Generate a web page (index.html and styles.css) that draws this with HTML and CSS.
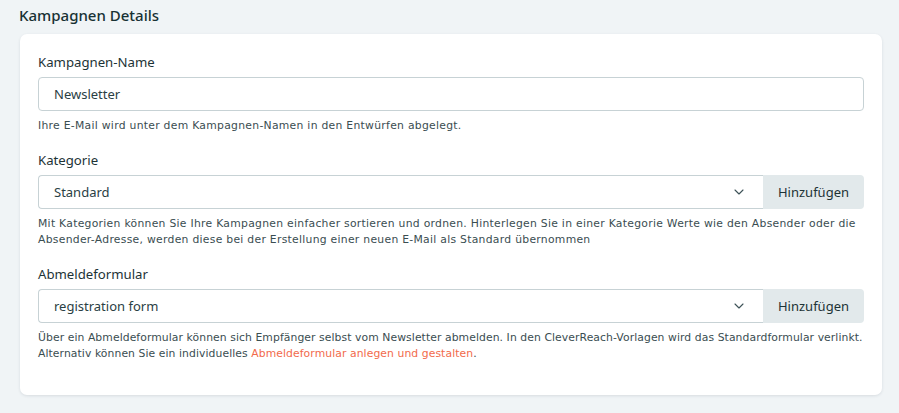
FILE: index.html
```html
<!DOCTYPE html>
<html lang="de">
<head>
<meta charset="utf-8">
<link rel="stylesheet" href="styles.css">
</head>
<body>
<div class="page">
  <h2 class="section-title">Kampagnen Details</h2>
  <div class="card">
    <div class="field">
      <label class="label">Kampagnen-Name</label>
      <div class="input">Newsletter</div>
      <p class="help">Ihre E-Mail wird unter dem Kampagnen-Namen in den Entwürfen abgelegt.</p>
    </div>
    <div class="field">
      <label class="label">Kategorie</label>
      <div class="group">
        <div class="select"><span>Standard</span>
          <svg class="chev" width="10" height="6" viewBox="0 0 10 6"><path d="M1 1 L5 5 L9 1" fill="none" stroke="#3d5257" stroke-width="1.1" stroke-linecap="round" stroke-linejoin="round"/></svg>
        </div>
        <div class="btn">Hinzufügen</div>
      </div>
      <p class="help">Mit Kategorien können Sie Ihre Kampagnen einfacher sortieren und ordnen. Hinterlegen Sie in einer Kategorie Werte wie den Absender oder die Absender-Adresse, werden diese bei der Erstellung einer neuen E-Mail als Standard übernommen</p>
    </div>
    <div class="field">
      <label class="label">Abmeldeformular</label>
      <div class="group">
        <div class="select"><span>registration form</span>
          <svg class="chev" width="10" height="6" viewBox="0 0 10 6"><path d="M1 1 L5 5 L9 1" fill="none" stroke="#3d5257" stroke-width="1.1" stroke-linecap="round" stroke-linejoin="round"/></svg>
        </div>
        <div class="btn">Hinzufügen</div>
      </div>
      <p class="help help-tight">Über ein Abmeldeformular können sich Empfänger selbst vom Newsletter abmelden. In den CleverReach-Vorlagen wird das Standardformular verlinkt. Alternativ können Sie ein individuelles <a class="link" href="#">Abmeldeformular anlegen und gestalten</a>.</p>
    </div>
  </div>
</div>
</body>
</html>
```
FILE: styles.css
```css
* { box-sizing: border-box; }
html, body { margin: 0; padding: 0; }
body {
  background: #f0f4f6;
  font-family: "Noto Sans", "DejaVu Sans", sans-serif;
  color: #1d3336;
  width: 899px;
  height: 413px;
  overflow: hidden;
}
.page {
  padding: 5px 17px 0 20px;
}
.section-title {
  margin: 0 0 9px -1px;
  font-size: 15px;
  font-weight: 500;
  line-height: 20px;
  color: #183134;
}
.card {
  background: #fff;
  border-radius: 7px;
  box-shadow: 0 1px 3px rgba(40, 60, 70, 0.12);
  padding: 18px 18px 40px 18px;
  height: 361px;
}
.field { display: flex; flex-direction: column; }
.field + .field { margin-top: 16px; }
.label {
  font-size: 13.2px;
  line-height: 20px;
  color: #1d3336;
  margin-bottom: 5px;
}
.input, .select {
  height: 34px;
  border: 1px solid #c7d2d5;
  border-radius: 4px;
  padding: 0 15px;
  font-size: 13px;
  display: flex;
  align-items: center;
  color: #2a4044;
}
.group { display: flex; }
.select {
  flex: 1;
  justify-content: space-between;
  border-radius: 4px 0 0 4px;
  border-right: none;
  padding-right: 19px;
}
.btn {
  width: 101px;
  height: 34px;
  background: #e2e9eb;
  border-radius: 0 4px 4px 0;
  display: flex;
  align-items: center;
  justify-content: center;
  font-size: 13px;
  color: #1d3336;
}
.help {
  margin: 7px 0 0 0;
  font-family: "DejaVu Sans", sans-serif;
  font-size: 10.8px;
  letter-spacing: 0.28px;
  line-height: 16px;
  color: #3a4d51;
}
.help-tight { letter-spacing: 0.08px; }
.link { color: #f26a4b; text-decoration: none; }
```
